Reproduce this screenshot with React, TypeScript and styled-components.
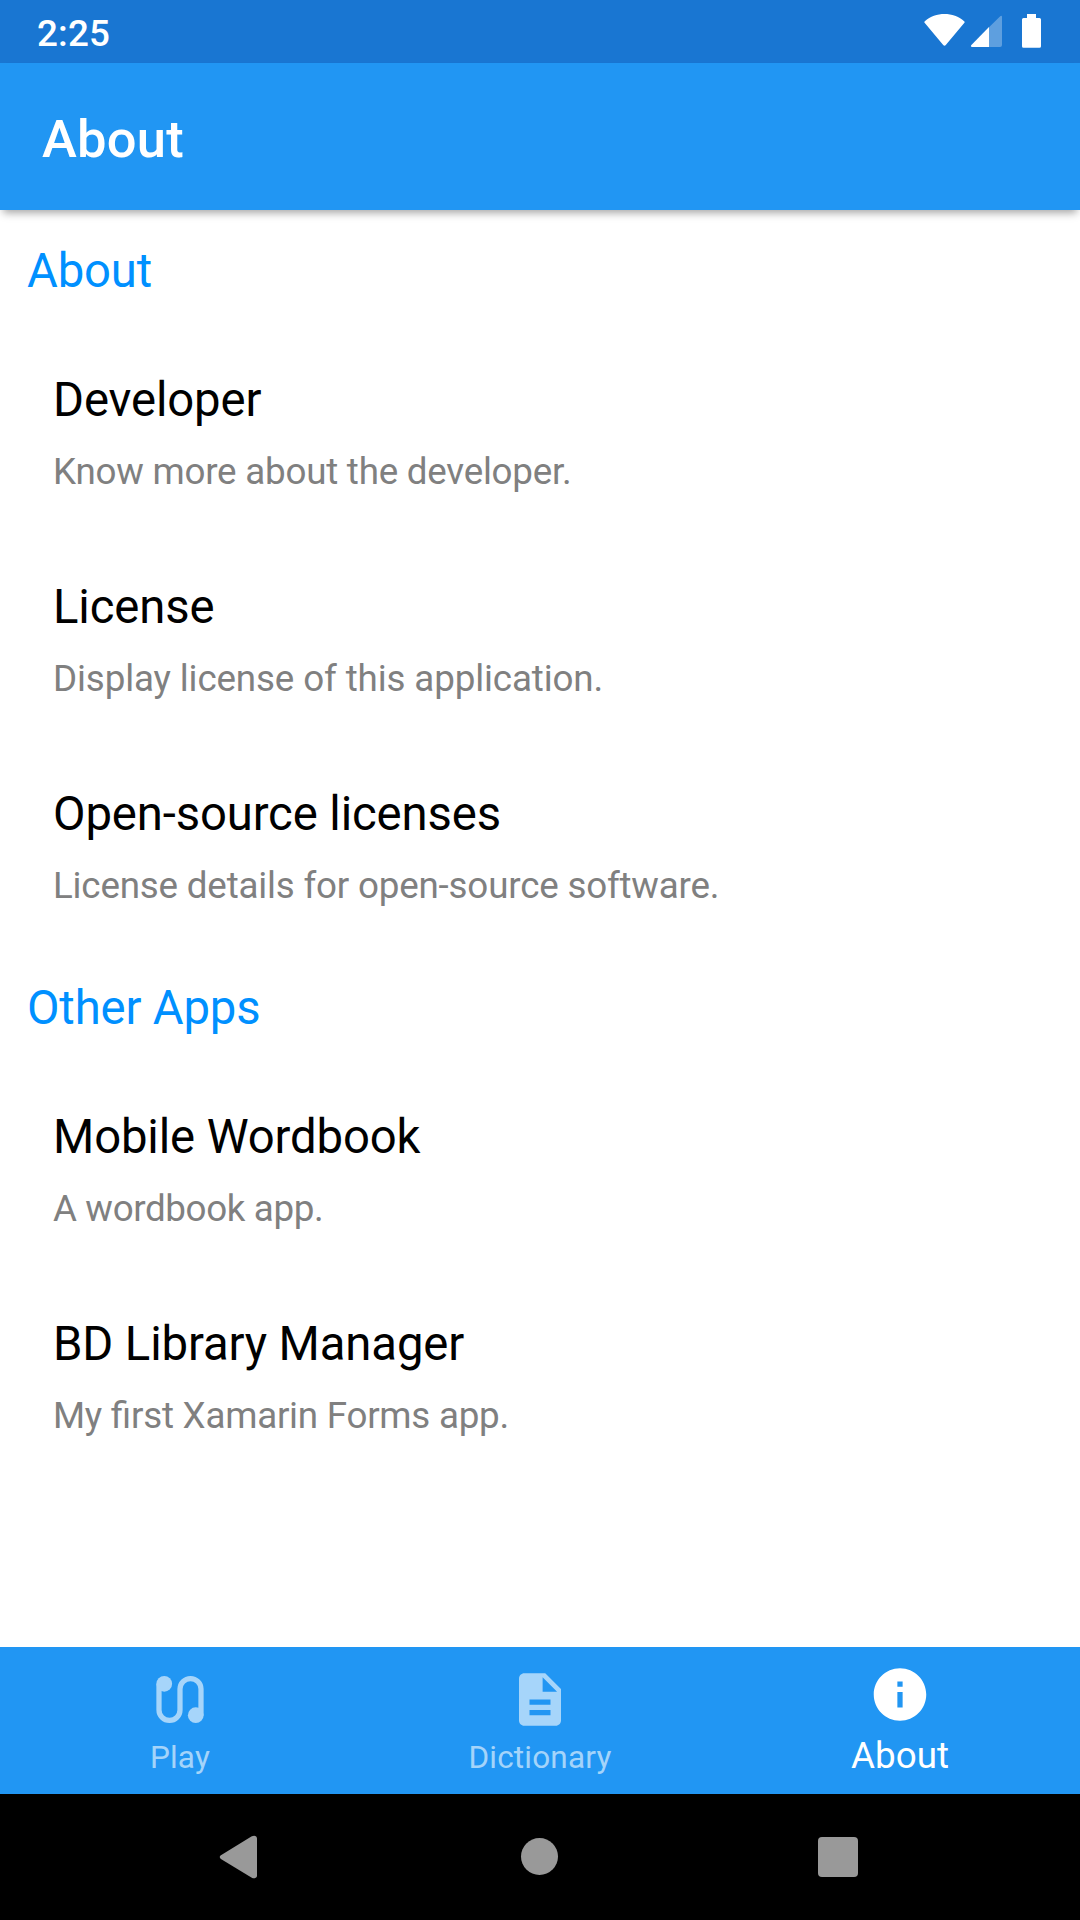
import React from "react";
import styled, { createGlobalStyle } from "styled-components";

const GlobalStyle = createGlobalStyle`
  * { box-sizing: border-box; }
  body { margin: 0; background: #fff; }
`;

const Screen = styled.div`
  width: 1080px;
  height: 1920px;
  display: flex;
  flex-direction: column;
  overflow: hidden;
  background: #fff;
  font-family: Roboto, sans-serif;
`;

const StatusBar = styled.header`
  height: 63px;
  flex: none;
  display: flex;
  justify-content: space-between;
  padding: 0 39px 0 37px;
  background: #1976d2;
  color: #fff;
`;

const Clock = styled.span`
  padding-top: 4px;
  font-size: 36.75px;
  font-weight: 500;
  line-height: 59px;
  letter-spacing: 0.15px;
`;

const StatusIcons = styled.div`
  display: flex;
  padding-top: 14px;

  svg { display: block; }
`;

const AppBar = styled.div`
  height: 147px;
  flex: none;
  padding: 0 42px;
  background: #2196f3;
  box-shadow: 0 6px 8px -3px rgba(0, 0, 0, 0.35);
  z-index: 1;
`;

const AppTitle = styled.h1`
  margin: 0;
  padding-top: 5px;
  color: #fff;
  font-size: 52.5px;
  font-weight: 500;
  line-height: 142px;
  letter-spacing: 0.25px;
`;

const Content = styled.main`
  flex: 1;
  min-height: 0;
`;

const SectionTitle = styled.h2`
  margin: 0;
  padding: 33px 27px 27px;
  color: #0090ff;
  font-size: 47.25px;
  font-weight: 400;
  line-height: 56px;
  letter-spacing: -0.16px;
`;

const Item = styled.div`
  height: 207px;
  padding: 46px 53px 0;
  display: flex;
  flex-direction: column;
  gap: 22px;
`;

const ItemTitle = styled.div`
  color: #000;
  font-size: 47.25px;
  line-height: 56px;
  letter-spacing: -0.12px;
`;

const ItemDetail = styled.div<{ $tracking: number }>`
  color: #808080;
  font-size: 36.75px;
  line-height: 44px;
  letter-spacing: ${(p) => p.$tracking}px;
  font-feature-settings: "liga" 1;
`;

const TabBar = styled.nav`
  height: 147px;
  flex: none;
  display: grid;
  grid-template-columns: repeat(3, 1fr);
  background: #2196f3;
`;

const Tab = styled.div<{ $active?: boolean }>`
  display: flex;
  flex-direction: column;
  justify-content: space-between;
  align-items: center;
  padding: ${(p) => (p.$active ? "15.75px 0 13px" : "21px 0 14px")};
  color: ${(p) => (p.$active ? "#fff" : "rgba(255, 255, 255, 0.6)")};
  font-size: ${(p) => (p.$active ? "36.75px" : "31.5px")};
  line-height: ${(p) => (p.$active ? "51px" : "44px")};
  letter-spacing: ${(p) => (p.$active ? "0" : "0.2px")};
`;

const TabIconBox = styled.svg`
  width: 64px;
  height: 63px;
  flex: none;
  display: block;
`;

const SystemNav = styled.footer`
  height: 126px;
  flex: none;
  display: flex;
  justify-content: space-between;
  align-items: center;
  padding: 0 217px 0 215px;
  background: #000;
  color: #999;
`;

const NavIcon = styled.svg`
  width: 48px;
  height: 48px;
  display: block;
`;

const TabIcon = ({ children }: { children: React.ReactNode }) => (
  <TabIconBox viewBox="-0.19 0 24.381 24" fill="currentColor">
    {children}
  </TabIconBox>
);

const PlayIcon = () => (
  <TabIcon>
    <mask id="trail" maskUnits="userSpaceOnUse" x="0" y="0" width="24" height="24">
      <path d="M4 6V16a4 4 0 0 0 8 0V8a4 4 0 0 1 8 0V18" fill="none" stroke="#fff" strokeWidth="2" />
      <circle cx="6" cy="6" r="3" fill="#fff" />
      <circle cx="18" cy="18" r="3" fill="#fff" />
    </mask>
    <rect width="24" height="24" mask="url(#trail)" />
  </TabIcon>
);

const DictionaryIcon = () => (
  <TabIcon>
    <path d="M14 2H6c-1.1 0-1.99.9-1.99 2L4 20c0 1.1.89 2 1.99 2H18c1.1 0 2-.9 2-2V8l-6-6zm2 16H8v-2h8v2zm0-4H8v-2h8v2zm-3-5V3.5L18.5 9H13z" />
  </TabIcon>
);

const InfoIcon = () => (
  <TabIcon>
    <path d="M12 2C6.48 2 2 6.48 2 12s4.48 10 10 10 10-4.48 10-10S17.52 2 12 2zm1 15h-2v-6h2v6zm0-8h-2V7h2v2z" />
  </TabIcon>
);

const sections = [
  {
    title: "About",
    items: [
      { title: "Developer", detail: "Know more about the developer.", tracking: -0.23 },
      { title: "License", detail: "Display license of this application.", tracking: -0.13 },
      { title: "Open-source licenses", detail: "License details for open-source software.", tracking: -0.19 },
    ],
  },
  {
    title: "Other Apps",
    items: [
      { title: "Mobile Wordbook", detail: "A wordbook app.", tracking: -0.36 },
      { title: "BD Library Manager", detail: "My first Xamarin Forms app.", tracking: -0.24 },
    ],
  },
];

export default function App() {
  return (
    <Screen>
      <GlobalStyle />
      <StatusBar>
        <Clock>2:25</Clock>
        <StatusIcons>
          <svg width="98" height="34" viewBox="0 0 98 34" fill="#fff">
            <path d="M.8 7.2C6.3 2.4 13.2 0 20.500 0s14.2 2.4 19.7 7.200c.6.5.6 1 .2 1.600L21.800 31c-.8.9-1.800.9-2.600 0L.6 8.800C.2 8.200.2 7.700.8 7.200z" />
            <path d="M76.200 2.300c1-1 1.800-.6 1.800.5V31a2 2 0 0 1-2 2H65V13.300z" opacity=".3" />
            <path d="M65 13.100V33H48.200c-1.400 0-1.700-1-.8-2z" />
          </svg>
          <svg width="19" height="34" viewBox="0 0 19 34" fill="#fff">
            <path d="M5 0h9v4h3.500A1.500 1.500 0 0 1 19 5.500V32.300a1.500 1.500 0 0 1-1.500 1.500h-16A1.500 1.500 0 0 1 0 32.300V5.500A1.500 1.500 0 0 1 1.500 4H5z" />
          </svg>
        </StatusIcons>
      </StatusBar>
      <AppBar>
        <AppTitle>About</AppTitle>
      </AppBar>
      <Content>
        {sections.map((section) => (
          <section key={section.title}>
            <SectionTitle>{section.title}</SectionTitle>
            {section.items.map((item) => (
              <Item key={item.title}>
                <ItemTitle>{item.title}</ItemTitle>
                <ItemDetail $tracking={item.tracking}>{item.detail}</ItemDetail>
              </Item>
            ))}
          </section>
        ))}
      </Content>
      <TabBar>
        <Tab>
          <PlayIcon />
          Play
        </Tab>
        <Tab>
          <DictionaryIcon />
          Dictionary
        </Tab>
        <Tab $active>
          <InfoIcon />
          About
        </Tab>
      </TabBar>
      <SystemNav>
        <NavIcon viewBox="0 0 48 48" fill="currentColor">
          <path d="M5.900 22.300 36.800 3.300C39.500 1.900 42 3 42 5.500V42.500c0 2.500-2.500 3.600-5.200 2.200L5.900 25.900C4.400 24.900 4.400 23.300 5.900 22.300z" />
        </NavIcon>
        <NavIcon viewBox="0 0 48 48" fill="currentColor">
          <circle cx="24.500" cy="23.500" r="18.500" />
        </NavIcon>
        <NavIcon viewBox="0 0 48 48" fill="currentColor">
          <rect x="3" y="4" width="40" height="40" rx="4" />
        </NavIcon>
      </SystemNav>
    </Screen>
  );
}
